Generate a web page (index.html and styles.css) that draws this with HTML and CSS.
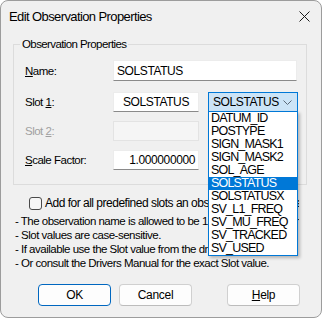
FILE: index.html
```html
<!DOCTYPE html>
<html lang="en">
<head>
    <meta charset="UTF-8">
    <title>Edit Observation Properties</title>
    <link rel="stylesheet" href="styles.css">
</head>
<body>
    <div class="dialog">
        <div class="titlebar">
            <span class="title">Edit Observation Properties</span>
            <svg class="close" width="11" height="11" viewBox="0 0 11 11">
                <path d="M0.5 0.5 L10.5 10.5 M10.5 0.5 L0.5 10.5" stroke="#1b1b1b" stroke-width="1" fill="none"/>
            </svg>
        </div>

        <fieldset class="group">
            <legend>Observation Properties</legend>
            <div class="row row-name">
                <label><u>N</u>ame:</label>
                <div class="edit edit-wide">SOLSTATUS</div>
            </div>
            <div class="row row-slot1">
                <label>Slot <u>1</u>:</label>
                <div class="edit edit-center">SOLSTATUS</div>
                <div class="combo">
                    <span>SOLSTATUS</span>
                    <svg class="chevron" width="9" height="5" viewBox="0 0 9 5">
                        <path d="M0.5 0.5 L4.5 4.5 L8.5 0.5" stroke="#5c6a78" stroke-width="1" fill="none"/>
                    </svg>
                    <ul class="droplist">
                        <li>DATUM_ID</li>
                        <li>POSTYPE</li>
                        <li>SIGN_MASK1</li>
                        <li>SIGN_MASK2</li>
                        <li>SOL_AGE</li>
                        <li class="selected">SOLSTATUS</li>
                        <li>SOLSTATUSX</li>
                        <li>SV_L1_FREQ</li>
                        <li>SV_MU_FREQ</li>
                        <li>SV_TRACKED</li>
                        <li>SV_USED</li>
                    </ul>
                </div>
            </div>
            <div class="row row-slot2">
                <label class="disabled">Slot <u>2</u>:</label>
                <div class="edit edit-disabled"></div>
            </div>
            <div class="row row-scale">
                <label><u>S</u>cale Factor:</label>
                <div class="edit edit-right">1.000000000</div>
            </div>
        </fieldset>

        <div class="check-row">
            <span class="checkbox"></span>
            <span class="check-label">Add for all predefined slots an observation with the same name</span>
        </div>

        <div class="notes">
            <p>- The observation name is allowed to be 1 to 32 characters long.</p>
            <p>- Slot values are case-sensitive.</p>
            <p>- If available use the Slot value from the driver's help file.</p>
            <p>- Or consult the Drivers Manual for the exact Slot value.</p>
        </div>

        <div class="buttons">
            <button class="btn btn-default">OK</button>
            <button class="btn">Cancel</button>
            <button class="btn btn-help"><u>H</u>elp</button>
        </div>
    </div>
</body>
</html>
```

FILE: styles.css
```css
* {
    margin: 0;
    padding: 0;
    box-sizing: border-box;
}

body {
    font-family: 'Liberation Sans', Arial, sans-serif;
    font-size: 11.5px;
    letter-spacing: -0.5px;
    color: #000;
    background: #ffffff;
}

.dialog {
    position: relative;
    width: 322px;
    height: 318px;
    background-color: #f0f0f0;
    border: 1px solid #9c9c9c;
    border-radius: 8px;
    overflow: hidden;
}

.titlebar {
    height: 30px;
    display: flex;
    align-items: center;
    justify-content: space-between;
    padding: 0 11px 0 8px;
}

.title {
    font-size: 13px;
    letter-spacing: -0.6px;
}

.close {
    display: block;
}

/* group box */
.group {
    margin: 6px 14px 0 12px;
    border: 1px solid #dcdcdc;
    padding: 9px 8px 14px 11px;
}

.group legend {
    margin-left: -5px;
    padding: 0 2px;
    line-height: 14px;
    letter-spacing: -0.6px;
}

.row {
    display: flex;
    align-items: center;
}

.row label {
    width: 88px;
    flex-shrink: 0;
}

.row .disabled {
    color: #a0a0a0;
}

.row-slot1 {
    margin-top: 10px;
}

.row-slot2,
.row-scale {
    margin-top: 9px;
}

.edit {
    height: 20px;
    line-height: 19px;
    background-color: #fff;
    border: 1px solid #ececec;
    border-bottom-color: #8a8a8a;
    padding: 0 4px;
    white-space: nowrap;
    font-size: 12px;
    letter-spacing: -0.4px;
}

.edit-wide {
    width: 184px;
    height: 21px;
    line-height: 20px;
    padding-left: 3px;
}

.edit-center {
    width: 86px;
    text-align: center;
}

.edit-right {
    width: 86px;
    text-align: right;
    padding-right: 3px;
}

.edit-disabled {
    width: 86px;
    background-color: #f5f5f5;
    border-color: #e3e3e3;
}

/* combo + open list */
.combo {
    position: relative;
    width: 90px;
    height: 20px;
    margin-left: 9px;
    margin-top: 1px;
    background-color: #cce4f7;
    border: 1px solid #0078d7;
    display: flex;
    align-items: center;
    justify-content: space-between;
    padding: 0 5px 0 4px;
    font-size: 12px;
    letter-spacing: -0.4px;
}

.chevron {
    display: block;
}

.droplist {
    position: absolute;
    top: 18px;
    left: -1px;
    width: 90px;
    list-style: none;
    background-color: #fff;
    border: 1px solid #0078d7;
    box-shadow: 2px 2px 3px rgba(0, 0, 0, 0.25);
    z-index: 2;
}

.droplist li {
    height: 13px;
    line-height: 13px;
    padding-left: 2px;
    font-size: 12.5px;
    letter-spacing: -0.8px;
}

.droplist .selected {
    background-color: #0078d7;
    color: #fff;
}

/* checkbox */
.check-row {
    display: flex;
    align-items: center;
    margin-top: 11px;
    padding-left: 28px;
    width: 298px;
    height: 14px;
    white-space: nowrap;
    overflow: hidden;
    font-size: 12px;
}

.checkbox {
    width: 13px;
    height: 13px;
    border: 1px solid #4a4a4a;
    border-radius: 3px;
    background-color: #f6f6f6;
    margin-right: 3px;
    flex-shrink: 0;
}

.notes {
    margin-top: 4px;
    padding-left: 14px;
    width: 298px;
    overflow: hidden;
}

.notes p {
    line-height: 14px;
    white-space: nowrap;
}

/* buttons */
.buttons {
    display: flex;
    margin-top: 14px;
    padding-left: 37px;
}

.btn {
    width: 73px;
    height: 22px;
    font-family: inherit;
    font-size: 12px;
    letter-spacing: -0.3px;
    background-color: #fdfdfd;
    border: 1px solid #d0d0d0;
    border-bottom-color: #bcbcbc;
    border-radius: 4px;
    margin-right: 8px;
}

.btn-default {
    border: 1px solid #0067c0;
}

.btn-help {
    margin-left: 27px;
}
```
